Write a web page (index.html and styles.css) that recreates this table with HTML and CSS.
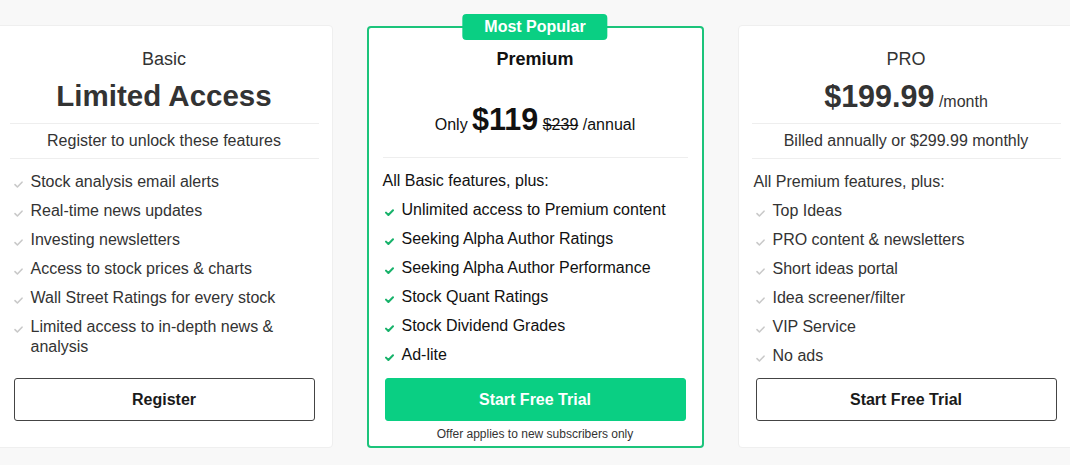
FILE: index.html
```html
<!DOCTYPE html>
<html lang="en">
<head>
<meta charset="utf-8">
<title>Plans</title>
<link rel="stylesheet" href="styles.css">
</head>
<body>
<main class="plans">
  <section class="card">
    <div class="head">
      <div class="tier">Basic</div>
      <div class="big">Limited Access</div>
      <div class="sub">Register to unlock these features</div>
    </div>
    <ul class="features">
      <li><svg class="chk" viewBox="0 0 9 7"><path d="M1 3.6 L3.4 6 L8 1.2"/></svg><span>Stock analysis email alerts</span></li>
      <li><svg class="chk" viewBox="0 0 9 7"><path d="M1 3.6 L3.4 6 L8 1.2"/></svg><span>Real-time news updates</span></li>
      <li><svg class="chk" viewBox="0 0 9 7"><path d="M1 3.6 L3.4 6 L8 1.2"/></svg><span>Investing newsletters</span></li>
      <li><svg class="chk" viewBox="0 0 9 7"><path d="M1 3.6 L3.4 6 L8 1.2"/></svg><span>Access to stock prices &amp; charts</span></li>
      <li><svg class="chk" viewBox="0 0 9 7"><path d="M1 3.6 L3.4 6 L8 1.2"/></svg><span>Wall Street Ratings for every stock</span></li>
      <li><svg class="chk" viewBox="0 0 9 7"><path d="M1 3.6 L3.4 6 L8 1.2"/></svg><span>Limited access to in-depth news &amp; analysis</span></li>
    </ul>
    <div class="foot">
      <button class="btn">Register</button>
    </div>
  </section>

  <section class="card popular">
    <div class="badge">Most Popular</div>
    <div class="head">
      <div class="tier strong">Premium</div>
      <div class="price"><span class="small">Only </span>$119<span class="small"> <s>$239</s> /annual</span></div>
    </div>
    <ul class="features">
      <li class="lead">All Basic features, plus:</li>
      <li><svg class="chk" viewBox="0 0 9 7"><path d="M1 3.6 L3.4 6 L8 1.2"/></svg><span>Unlimited access to Premium content</span></li>
      <li><svg class="chk" viewBox="0 0 9 7"><path d="M1 3.6 L3.4 6 L8 1.2"/></svg><span>Seeking Alpha Author Ratings</span></li>
      <li><svg class="chk" viewBox="0 0 9 7"><path d="M1 3.6 L3.4 6 L8 1.2"/></svg><span>Seeking Alpha Author Performance</span></li>
      <li><svg class="chk" viewBox="0 0 9 7"><path d="M1 3.6 L3.4 6 L8 1.2"/></svg><span>Stock Quant Ratings</span></li>
      <li><svg class="chk" viewBox="0 0 9 7"><path d="M1 3.6 L3.4 6 L8 1.2"/></svg><span>Stock Dividend Grades</span></li>
      <li><svg class="chk" viewBox="0 0 9 7"><path d="M1 3.6 L3.4 6 L8 1.2"/></svg><span>Ad-lite</span></li>
    </ul>
    <div class="foot">
      <button class="btn primary">Start Free Trial</button>
      <div class="note">Offer applies to new subscribers only</div>
    </div>
  </section>

  <section class="card">
    <div class="head">
      <div class="tier">PRO</div>
      <div class="big price-big">$199.99<span class="small"> /month</span></div>
      <div class="sub">Billed annually or $299.99 monthly</div>
    </div>
    <ul class="features">
      <li class="lead">All Premium features, plus:</li>
      <li><svg class="chk" viewBox="0 0 9 7"><path d="M1 3.6 L3.4 6 L8 1.2"/></svg><span>Top Ideas</span></li>
      <li><svg class="chk" viewBox="0 0 9 7"><path d="M1 3.6 L3.4 6 L8 1.2"/></svg><span>PRO content &amp; newsletters</span></li>
      <li><svg class="chk" viewBox="0 0 9 7"><path d="M1 3.6 L3.4 6 L8 1.2"/></svg><span>Short ideas portal</span></li>
      <li><svg class="chk" viewBox="0 0 9 7"><path d="M1 3.6 L3.4 6 L8 1.2"/></svg><span>Idea screener/filter</span></li>
      <li><svg class="chk" viewBox="0 0 9 7"><path d="M1 3.6 L3.4 6 L8 1.2"/></svg><span>VIP Service</span></li>
      <li><svg class="chk" viewBox="0 0 9 7"><path d="M1 3.6 L3.4 6 L8 1.2"/></svg><span>No ads</span></li>
    </ul>
    <div class="foot">
      <button class="btn">Start Free Trial</button>
    </div>
  </section>
</main>
</body>
</html>
```

FILE: styles.css
```css
html, body {
  margin: 0;
  padding: 0;
}

body {
  background: #f8f8f8;
  font-family: "Liberation Sans", Arial, sans-serif;
  color: #333;
  width: 1070px;
  height: 465px;
  overflow: hidden;
}

.plans {
  display: flex;
  justify-content: center;
  align-items: flex-start;
  gap: 34px;
  padding-top: 25px;
}

.card {
  position: relative;
  flex: 0 0 337px;
  height: 423px;
  box-sizing: border-box;
  background: #fff;
  border: 1px solid #efefef;
  border-radius: 4px;
  padding: 0 17px;
  display: flex;
  flex-direction: column;
}

.card.popular {
  margin-top: 1px;
  height: 422px;
  border: 2px solid #1cc47b;
  padding: 0 16px;
  color: #111;
}

.badge {
  position: absolute;
  top: -14px;
  left: 50%;
  transform: translateX(-50%);
  background: #0acf83;
  color: #fff;
  font-weight: bold;
  font-size: 16px;
  line-height: 26px;
  padding: 0 22px;
  border-radius: 4px;
  white-space: nowrap;
}

.head {
  text-align: center;
  padding-top: 22px;
}

.popular .head {
  padding-top: 20px;
}

.tier {
  font-size: 18px;
  line-height: 22px;
}

.tier.strong {
  font-weight: bold;
}

.big {
  margin-top: 9px;
  font-size: 29.5px;
  line-height: 34px;
  height: 34px;
  font-weight: bold;
  color: #333;
}

.big.price-big {
  font-size: 30.5px;
}

.big .small {
  font-size: 16px;
  line-height: 1;
  font-weight: normal;
}

.sub {
  margin: 10px -4px 0;
  border-top: 1px solid #eee;
  border-bottom: 1px solid #eee;
  padding: 5px 0;
  font-size: 16px;
  line-height: 24px;
}

.price {
  margin: 31px -2px 0;
  padding-bottom: 20px;
  border-bottom: 1px solid #eee;
  font-size: 30.5px;
  line-height: 36px;
  height: 36px;
  font-weight: bold;
}

.price .small {
  font-size: 16px;
  line-height: 1;
  font-weight: normal;
}

.features {
  list-style: none;
  margin: 0;
  padding: 13px 0 0;
  font-size: 16px;
  line-height: 20px;
}

.features li {
  display: flex;
  align-items: flex-start;
  margin-bottom: 9px;
}

.features li.lead {
  margin-left: -2px;
}

.chk {
  flex: 0 0 9px;
  width: 9px;
  height: 7px;
  margin: 9px 8px 0 0;
  fill: none;
  stroke: #c9c9c9;
  stroke-width: 1.6;
  stroke-linecap: round;
  stroke-linejoin: round;
}

.popular .chk {
  stroke: #17b26a;
  stroke-width: 2;
}

.foot {
  margin-top: auto;
  height: 69px;
}

.popular .foot {
  height: 68px;
}

.btn {
  display: block;
  width: 100%;
  height: 43px;
  box-sizing: border-box;
  border: 1px solid #444;
  border-radius: 3px;
  background: #fff;
  color: #1a1a1a;
  font-family: "Liberation Sans", Arial, sans-serif;
  font-size: 16px;
  font-weight: bold;
  cursor: pointer;
}

.btn.primary {
  background: #0acf83;
  border-color: #0acf83;
  color: #fff;
}

.note {
  text-align: center;
  font-size: 12px;
  line-height: 14px;
  margin-top: 6px;
  color: #333;
}
```
